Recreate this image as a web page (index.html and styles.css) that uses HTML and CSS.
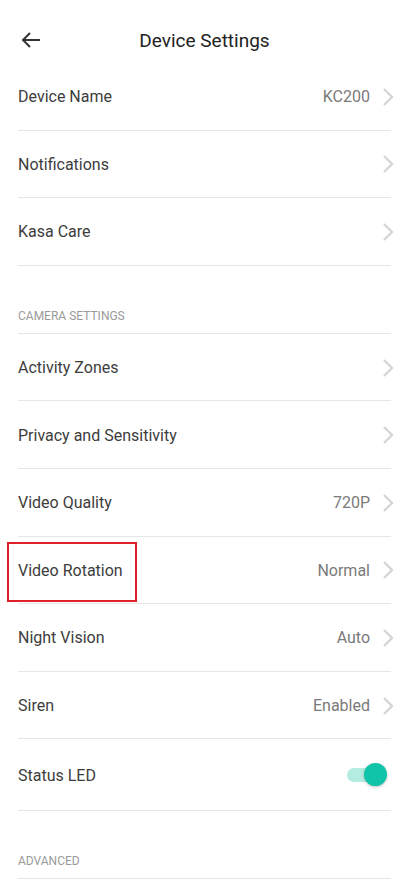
FILE: index.html
```
<!DOCTYPE html>
<html lang="en">

<head>
    <meta charset="UTF-8">
    <meta name="viewport" content="width=device-width, initial-scale=1.0">
    <title>Device Settings</title>
    <link rel="stylesheet" href="styles.css">
</head>

<body>
    <div class="header">
        <svg class="back" width="24" height="24" viewBox="0 0 24 24">
            <path d="M21 12H4M11 5l-7 7 7 7" fill="none" stroke="#333" stroke-width="2" />
        </svg>
        <div class="title">Device Settings</div>
    </div>

    <div class="list">
        <div class="row"><span class="label">Device Name</span><span class="value">KC200</span><svg class="chev" viewBox="0 0 12 20"><path d="M2 2l8 8-8 8" /></svg></div>
        <div class="row"><span class="label">Notifications</span><svg class="chev" viewBox="0 0 12 20"><path d="M2 2l8 8-8 8" /></svg></div>
        <div class="row"><span class="label">Kasa Care</span><svg class="chev" viewBox="0 0 12 20"><path d="M2 2l8 8-8 8" /></svg></div>

        <div class="section">Camera Settings</div>
        <div class="row"><span class="label">Activity Zones</span><svg class="chev" viewBox="0 0 12 20"><path d="M2 2l8 8-8 8" /></svg></div>
        <div class="row"><span class="label">Privacy and Sensitivity</span><svg class="chev" viewBox="0 0 12 20"><path d="M2 2l8 8-8 8" /></svg></div>
        <div class="row"><span class="label">Video Quality</span><span class="value">720P</span><svg class="chev" viewBox="0 0 12 20"><path d="M2 2l8 8-8 8" /></svg></div>
        <div class="row">
            <span class="label">Video Rotation</span><span class="value">Normal</span><svg class="chev" viewBox="0 0 12 20"><path d="M2 2l8 8-8 8" /></svg>
            <!-- highlight box -->
            <div class="mark"></div>
        </div>
        <div class="row"><span class="label">Night Vision</span><span class="value">Auto</span><svg class="chev" viewBox="0 0 12 20"><path d="M2 2l8 8-8 8" /></svg></div>
        <div class="row"><span class="label">Siren</span><span class="value">Enabled</span><svg class="chev" viewBox="0 0 12 20"><path d="M2 2l8 8-8 8" /></svg></div>
        <div class="row tall">
            <span class="label">Status LED</span>
            <div class="toggle"><div class="knob"></div></div>
        </div>

        <div class="section">Advanced</div>
    </div>
</body>

</html>
```

FILE: styles.css
```
* {
    box-sizing: border-box;
}

body {
    margin: 0;
    background: #fff;
    font-family: Roboto, "Liberation Sans", sans-serif;
    color: #3a3a3a;
}

.header {
    height: 63px;
    display: flex;
    justify-content: center;
    position: relative;
}

.back {
    position: absolute;
    left: 19px;
    top: 28px;
}

.title {
    font-size: 19px;
    color: #222;
    padding-top: 29px;
}

.list {
    margin: 0 18px;
}

.row {
    height: 67.6px;
    display: flex;
    align-items: center;
    border-bottom: 1px solid #e6e6e6;
    position: relative;
    padding-top: 1px;
}

.row.tall {
    height: 72px;
}

.label {
    flex: 1;
    font-size: 16px;
    color: #3d3d3d;
}

.value {
    font-size: 16px;
    color: #7a7a7a;
    margin-right: 12px;
}

.chev {
    width: 12px;
    height: 20px;
    margin-right: -3px;
    fill: none;
    stroke: #d6d6d6;
    stroke-width: 2.4;
}

.section {
    height: 68px;
    display: flex;
    align-items: flex-end;
    padding-bottom: 10px;
    font-size: 12px;
    color: #9a9a9a;
    text-transform: uppercase;
    border-bottom: 1px solid #e6e6e6;
}

.mark {
    position: absolute;
    left: -11px;
    top: 5px;
    width: 130px;
    height: 60px;
    border: 2px solid #e0202c;
}

.toggle {
    width: 34px;
    height: 14px;
    border-radius: 7px;
    background: #b5ece2;
    position: relative;
    margin-right: 10px;
}

.knob {
    position: absolute;
    right: -6px;
    top: -5px;
    width: 23px;
    height: 23px;
    border-radius: 50%;
    background: #10c4aa;
    box-shadow: 0 1px 3px rgba(0, 0, 0, 0.25);
}
```
